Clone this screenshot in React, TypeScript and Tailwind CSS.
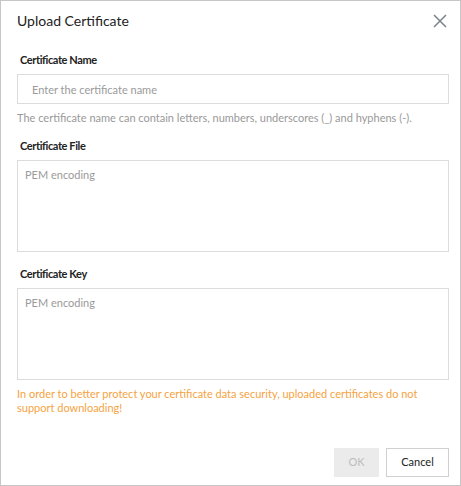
import React from 'react';

const font = { fontFamily: 'Lato, "Open Sans", Arial, sans-serif' };

export default function App() {
  return (
    <div
      className="w-[461px] h-[486px] bg-white border border-[#c6c6c6] flex flex-col text-[#333]"
      style={font}
    >
      <div className="flex items-center justify-between h-[40px] pl-4 pr-[12px]">
        <h1 className="text-[14px] leading-none text-[#222]">Upload Certificate</h1>
        <button className="text-[#7b8189] w-[16px] h-[16px] flex items-center justify-center">
          <svg width="14" height="14" viewBox="0 0 14 14" fill="none" stroke="currentColor" strokeWidth="1.5">
            <path d="M1 1L13 13M13 1L1 13" />
          </svg>
        </button>
      </div>

      <div className="flex flex-col px-4">
        <label className="mt-[11px] ml-[3px] text-[11px] font-bold leading-[16px] tracking-[-0.4px] text-[#222]">
          Certificate Name
        </label>
        <input
          className="mt-[6px] h-[30px] w-[432px] border border-[#dcdcdc] px-[14px] text-[11px] placeholder:text-[#9a9a9a] outline-none"
          placeholder="Enter the certificate name"
        />
        <p className="mt-[6px] text-[11px] leading-[16px] text-[#999]">
          The certificate name can contain letters, numbers, underscores (_) and hyphens (-).
        </p>

        <label className="mt-[12px] ml-[3px] text-[11px] font-bold leading-[16px] tracking-[-0.4px] text-[#222]">
          Certificate File
        </label>
        <textarea
          className="mt-[6px] h-[92px] w-[432px] border border-[#dcdcdc] px-[7px] py-[5px] text-[11px] leading-[17px] resize-none placeholder:text-[#9a9a9a] outline-none"
          placeholder="PEM encoding"
        />

        <label className="mt-[14px] ml-[3px] text-[11px] font-bold leading-[16px] tracking-[-0.4px] text-[#222]">
          Certificate Key
        </label>
        <textarea
          className="mt-[6px] h-[92px] w-[432px] border border-[#dcdcdc] px-[7px] py-[5px] text-[11px] leading-[17px] resize-none placeholder:text-[#9a9a9a] outline-none"
          placeholder="PEM encoding"
        />

        <p className="mt-[7px] text-[11px] leading-[14px] text-[#f5a341] pr-[6px]">
          In order to better protect your certificate data security, uploaded certificates do not support downloading!
        </p>
      </div>

      <div className="mt-auto mb-[8px] flex justify-end gap-[7px] pr-[11px]">
        <button className="h-[29px] w-[45px] bg-[#ebebeb] text-[11px] text-[#bdbdbd]" disabled>
          OK
        </button>
        <button className="h-[29px] w-[63px] border border-[#d0d0d0] bg-white text-[11px] text-[#222]">
          Cancel
        </button>
      </div>
    </div>
  );
}
